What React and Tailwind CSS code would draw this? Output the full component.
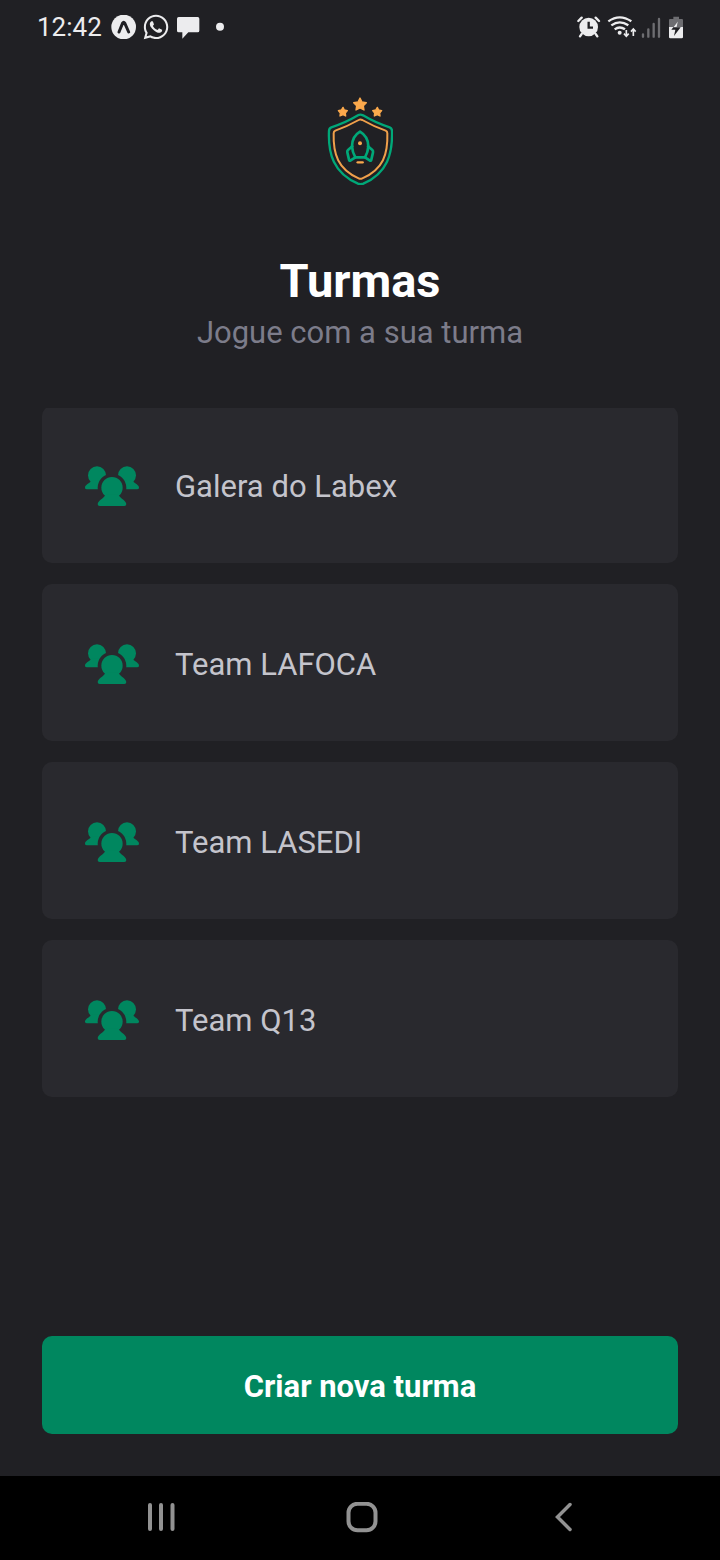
import { FaWhatsapp } from "react-icons/fa";

const teams = ["Galera do Labex", "Team LAFOCA", "Team LASEDI", "Team Q13"];

function StatusBar() {
  return (
    <header className="flex h-[54px] items-center justify-between pr-[35px] pl-[37px] text-[#ececee]">
      <div className="flex items-center gap-1">
        <time className="mr-1 text-[26px] leading-8">12:42</time>
        <svg aria-hidden="true" className="h-6 w-7" viewBox="240 44 84 72">
          <circle cx="281" cy="80" r="37" fill="currentColor" />
          <path
            d="M267 95 L278 68 Q281 63 284 68 L296 95"
            fill="none"
            stroke="#202024"
            strokeWidth="9"
            strokeLinecap="round"
          />
        </svg>
        <FaWhatsapp aria-hidden="true" className="h-7 w-7" />
        <svg aria-hidden="true" className="h-6 w-7" viewBox="432 44 84 72">
          <path
            d="M446 50 H503 Q508 50 508 55 V91 Q508 96 503 96 H475 L457 115 V96 H446 Q441 96 441 91 V55 Q441 50 446 50Z"
            fill="currentColor"
          />
        </svg>
        <svg aria-hidden="true" className="h-6 w-[22px]" viewBox="528 44 66 72">
          <circle cx="570" cy="79" r="12" fill="currentColor" />
        </svg>
      </div>
      <div className="flex items-center gap-1">
        <svg aria-hidden="true" className="h-6 w-[25px]" viewBox="36 43 75 72">
          <g fill="none" stroke="currentColor" strokeLinecap="round">
            <path d="M40 61 L50 51 M102 61 L92 51" strokeWidth="7" />
            <path d="M50 100 L45 107 M92 100 L97 107" strokeWidth="7" />
          </g>
          <circle cx="71" cy="79" r="28" fill="currentColor" />
          <path d="M71 63 V81 H84" fill="none" stroke="#202024" strokeWidth="7" />
        </svg>
        <svg aria-hidden="true" className="h-6 w-[31px]" viewBox="123 43 93 72">
          <g fill="none" stroke="currentColor" strokeWidth="7">
            <path d="M130 62 Q164 38 199 62" />
            <path d="M139 74 Q164 56 190 74" />
            <path d="M149 86 Q164 75 180 86" />
            <path d="M184 88 V106 M205 106 V87" strokeWidth="5" />
            <path d="M177 99 L184 107 L191 99 M198 93 L205 85 L212 93" strokeWidth="5" />
          </g>
          <circle cx="164" cy="96" r="6" fill="currentColor" />
        </svg>
        <svg aria-hidden="true" className="h-6 w-[21px]" viewBox="228 43 63 72">
          <g fill="none" stroke="#6d6d71" strokeWidth="7" strokeLinecap="round">
            <path d="M234 101 V108 M250 86 V108 M266 70 V108 M282 55 V108" />
          </g>
        </svg>
        <svg aria-hidden="true" className="h-6 w-[19px]" viewBox="303 43 57 72">
          <path
            d="M325 48 H342 V55 H351 Q354 55 354 59 V80 H312 V59 Q312 55 315 55 H325Z"
            fill="#6d6d71"
          />
          <path d="M312 79 H354 V109 Q354 113 350 113 H316 Q312 113 312 109Z" fill="currentColor" />
          <path d="M339 62 L319 87 H331 L327 106 L347 80 H335Z" fill="#202024" />
          <path d="M339 62 L325 80 H335Z" fill="currentColor" />
        </svg>
      </div>
    </header>
  );
}

function Logo() {
  return (
    <svg role="img" aria-label="Ignite Teams" className="h-22 w-[66px]" viewBox="51 36 198 264">
      <g fill="#fba94c" stroke="#fba94c" strokeWidth="4" strokeLinejoin="round">
        <path d="M150 39 L156 51 L169 53 L160 62 L162 75 L150 69 L138 75 L140 62 L131 53 L144 51Z" />
        <path d="M99 67 L103 75 L112 77 L106 84 L107 93 L99 89 L90 93 L91 84 L85 77 L94 75Z" />
        <path d="M202 67 L206 75 L215 77 L209 84 L210 93 L202 89 L193 93 L194 84 L188 77 L197 75Z" />
      </g>
      <g fill="none" strokeLinejoin="round" strokeLinecap="round">
        <path
          d="M144 91 Q151 87 159 91 C184 106 204 116 239 127 Q246 130 246 138 C248 205 233 264 160 296 Q152 299 144 296 C70 264 54 205 57 138 Q57 130 64 127 C99 116 119 106 144 91Z"
          stroke="#00a878"
          strokeWidth="7"
        />
        <path
          d="M146 105 Q151 102 157 105 C182 119 201 128 227 137 Q232 139 232 145 C234 207 220 253 157 280 Q151 283 146 280 C84 253 69 207 71 145 Q71 139 76 137 C101 128 121 119 146 105Z"
          stroke="#f0a04b"
          strokeWidth="6"
        />
        <path
          d="M150 140 C133 150 126 168 126 184 Q127 201 136 217 H165 Q174 201 175 184 C175 168 167 150 150 140Z"
          stroke="#00a878"
          strokeWidth="8"
        />
        <path
          d="M127 184 L114 195 Q111 198 112 202 L117 224 Q118 229 122 226 L136 217 M174 184 L187 195 Q190 198 189 202 L184 224 Q183 229 179 226 L165 217"
          stroke="#00a878"
          strokeWidth="8"
        />
        <path d="M143 232 H158" stroke="#fba94c" strokeWidth="7" />
      </g>
      <circle cx="150" cy="175" r="6" fill="#fba94c" />
    </svg>
  );
}

function TeamIcon() {
  return (
    <svg aria-hidden="true" className="h-[42px] w-14 shrink-0 fill-[#00875f]" viewBox="42 42 168 126">
      <defs>
        <mask id="front-person-gap" maskUnits="userSpaceOnUse" x="42" y="42" width="168" height="126">
          <rect x="42" y="42" width="168" height="126" fill="white" />
          <circle cx="126" cy="111" r="43" fill="black" />
        </mask>
      </defs>
      <g mask="url(#front-person-gap)">
        <circle cx="81" cy="73" r="27" />
        <path d="M64 88 C63 96 47 99 45 109 Q44 115 50 115 H90 V88Z" />
        <circle cx="171" cy="73" r="27" />
        <path d="M188 88 C189 96 205 99 207 109 Q208 115 202 115 H162 V88Z" />
      </g>
      <circle cx="126" cy="110" r="32" />
      <path d="M106 130 C105 142 85 146 83 159 Q83 165 89 165 H163 Q169 165 169 159 C167 146 147 142 146 130Z" />
    </svg>
  );
}

function TeamCard({ name }) {
  return (
    <li>
      <button
        type="button"
        className="flex h-[157px] w-full items-center gap-[35px] rounded-[10px] bg-[#29292e] px-[42px] pt-0.5 text-left text-[31px] leading-10 text-[#c4c4cc]"
      >
        <TeamIcon />
        <span className="pt-0.5">{name}</span>
      </button>
    </li>
  );
}

function NavigationBar() {
  return (
    <nav className="grid h-[84px] grid-cols-3 items-center bg-black pr-14 pl-15 text-[#929292]">
      <button type="button" aria-label="Recentes" className="flex h-full items-center justify-center">
        <svg className="h-8 w-8" viewBox="0 0 32 32" fill="none" stroke="currentColor" strokeWidth="4" strokeLinecap="round">
          <path d="M5 3 V27 M16 3 V27 M27.500 3 V27" />
        </svg>
      </button>
      <button type="button" aria-label="Início" className="flex h-full items-center justify-center">
        <svg className="h-8 w-8" viewBox="0 0 32 32" fill="none" stroke="currentColor" strokeWidth="4">
          <rect x="2.500" y="1.800" width="27" height="26.500" rx="9" />
        </svg>
      </button>
      <button type="button" aria-label="Voltar" className="flex h-full items-center justify-center">
        <svg className="h-8 w-8" viewBox="0 0 32 32" fill="none" stroke="currentColor" strokeWidth="3.500" strokeLinecap="round">
          <path d="M23 2.500 L10.500 15 L23 27.500" />
        </svg>
      </button>
    </nav>
  );
}

export default function App() {
  return (
    <div className="flex min-h-screen flex-col bg-[#202024] font-['Roboto','Noto_Sans',sans-serif]">
      <StatusBar />
      <main className="flex flex-1 flex-col px-[42px] pt-[43px] pb-[42px]">
        <div className="flex justify-center">
          <Logo />
        </div>
        <div className="mt-[68px] text-center">
          <h1 className="text-[47px] leading-14 font-bold text-white">Turmas</h1>
          <p className="text-[31px] leading-12 text-[#7c7c8a]">Jogue com a sua turma</p>
        </div>
        <div className="mt-[51px] flex-1 overflow-hidden">
          <ul className="-mt-0.5 flex flex-col gap-[21px]">
            {teams.map((name) => (
              <TeamCard key={name} name={name} />
            ))}
          </ul>
        </div>
        <button
          type="button"
          className="h-[98px] w-full rounded-[10px] bg-[#00875f] pt-1 text-[31px] leading-10 font-bold text-white"
        >
          Criar nova turma
        </button>
      </main>
      <NavigationBar />
    </div>
  );
}
